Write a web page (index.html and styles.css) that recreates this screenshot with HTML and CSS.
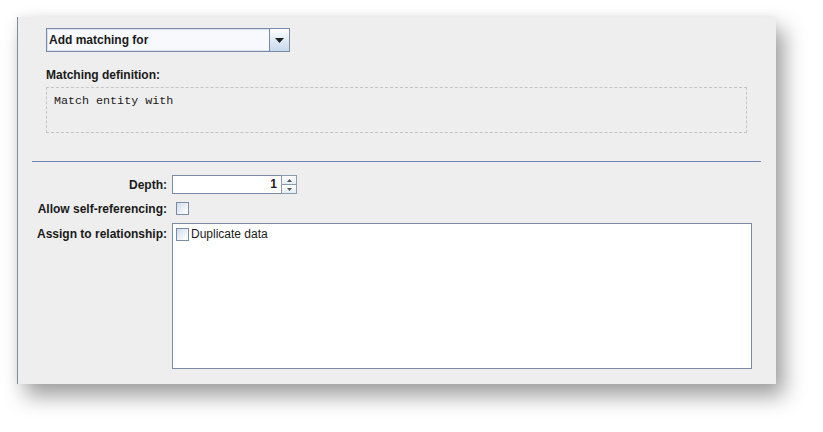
FILE: index.html
```html
<!DOCTYPE html>
<html>
<head>
<meta charset="utf-8">
<link rel="stylesheet" href="styles.css">
</head>
<body>
<div class="panel">
  <div class="top">
    <div class="combo">
      <span class="combo-text">Add matching for</span>
      <span class="combo-btn"><svg width="9" height="5" viewBox="0 0 9 5"><path d="M0 0h9L4.5 5z" fill="#222"/></svg></span>
    </div>
    <div class="def-label">Matching definition:</div>
    <div class="def-box">Match entity with</div>
  </div>
  <div class="sep"></div>
  <div class="form">
    <div class="lbl lbl-mid">Depth:</div>
    <div class="spinner">
      <div class="spin-field">1</div>
      <div class="spin-btns">
        <span class="spin-b"><svg width="5" height="3" viewBox="0 0 5 3"><path d="M0 3h5L2.5 0z" fill="#555"/></svg></span>
        <span class="spin-b"><svg width="5" height="3" viewBox="0 0 5 3"><path d="M0 0h5L2.5 3z" fill="#555"/></svg></span>
      </div>
    </div>
    <div class="lbl lbl-mid">Allow self-referencing:</div>
    <div class="cell-mid"><span class="chk"></span></div>
    <div class="lbl lbl-top">Assign to relationship:</div>
    <div class="list">
      <div class="list-item"><span class="chk"></span><span>Duplicate data</span></div>
    </div>
  </div>
</div>
</body>
</html>
```
FILE: styles.css
```css
html, body { margin: 0; padding: 0; background: #ffffff; }
body {
  font-family: "Liberation Sans", Arial, sans-serif;
  font-size: 12px;
  color: #1a1a1a;
  width: 823px;
  height: 432px;
  overflow: hidden;
}
.panel {
  margin: 17px 0 0 17px;
  width: 759px;
  height: 367px;
  box-sizing: border-box;
  background: #eeeeee;
  border-left: 1px solid #7e8c9c;
  box-shadow: 8px 12px 20px rgba(0, 0, 0, 0.38), 0 -2px 8px rgba(0, 0, 0, 0.05);
}
.top {
  padding: 11px 29px 0 28px;
}
.combo {
  display: flex;
  width: 244px;
  height: 24px;
  box-sizing: border-box;
  border: 1px solid #7a8ca3;
  background: #ffffff;
}
.combo-text {
  flex: 1;
  display: flex;
  align-items: center;
  padding-left: 1px;
  font-weight: bold;
  border: 1px solid #d6e2f0;
  border-right: none;
  background: #f7f9fc;
}
.combo-btn {
  width: 19px;
  display: flex;
  align-items: center;
  justify-content: center;
  border-left: 1px solid #7a8ca3;
  background: linear-gradient(#ffffff, #dde8f4 55%, #c8d9ec);
}
.def-label {
  margin-top: 16px;
  font-weight: bold;
  line-height: 14px;
}
.def-box {
  margin-top: 5px;
  height: 46px;
  box-sizing: border-box;
  border: 1px dashed #c4c4c4;
  padding: 6px 0 0 7px;
  font-family: "Liberation Mono", "Courier New", monospace;
  font-size: 11.7px;
  line-height: 14px;
  color: #1a1a1a;
}
.sep {
  margin: 28px 15px 0 14px;
  height: 1px;
  background: #7088b8;
}
.form {
  display: grid;
  grid-template-columns: 149px 580px;
  grid-template-rows: 19px 17px 146px;
  column-gap: 5px;
  row-gap: 6px;
  margin-top: 13px;
}
.lbl {
  font-weight: bold;
  text-align: right;
  line-height: 14px;
}
.lbl-mid { align-self: center; }
.lbl-top { padding-top: 4px; }
.spinner {
  display: flex;
  width: 125px;
  height: 19px;
}
.spin-field {
  width: 109px;
  box-sizing: border-box;
  border: 1px solid #7a8ca3;
  border-right: none;
  background: #ffffff;
  font-weight: bold;
  text-align: right;
  padding-right: 4px;
  line-height: 17px;
}
.spin-btns {
  width: 16px;
  display: flex;
  flex-direction: column;
  border: 1px solid #8a9bb0;
  box-sizing: border-box;
}
.spin-b {
  flex: 1;
  display: flex;
  align-items: center;
  justify-content: center;
  background: linear-gradient(#ffffff, #e4ecf5);
}
.spin-b + .spin-b { border-top: 1px solid #8a9bb0; }
.cell-mid {
  display: flex;
  align-items: center;
  padding-left: 4px;
}
.chk {
  display: inline-block;
  width: 13px;
  height: 13px;
  box-sizing: border-box;
  border: 1px solid #7a8ca3;
  background: linear-gradient(135deg, #cfdcec, #f4f7fb 70%, #ffffff);
}
.list {
  box-sizing: border-box;
  border: 1px solid #7a8ca3;
  background: #ffffff;
  padding: 3px 0 0 3px;
}
.list-item {
  display: flex;
  align-items: center;
  gap: 2px;
  line-height: 14px;
}
```
